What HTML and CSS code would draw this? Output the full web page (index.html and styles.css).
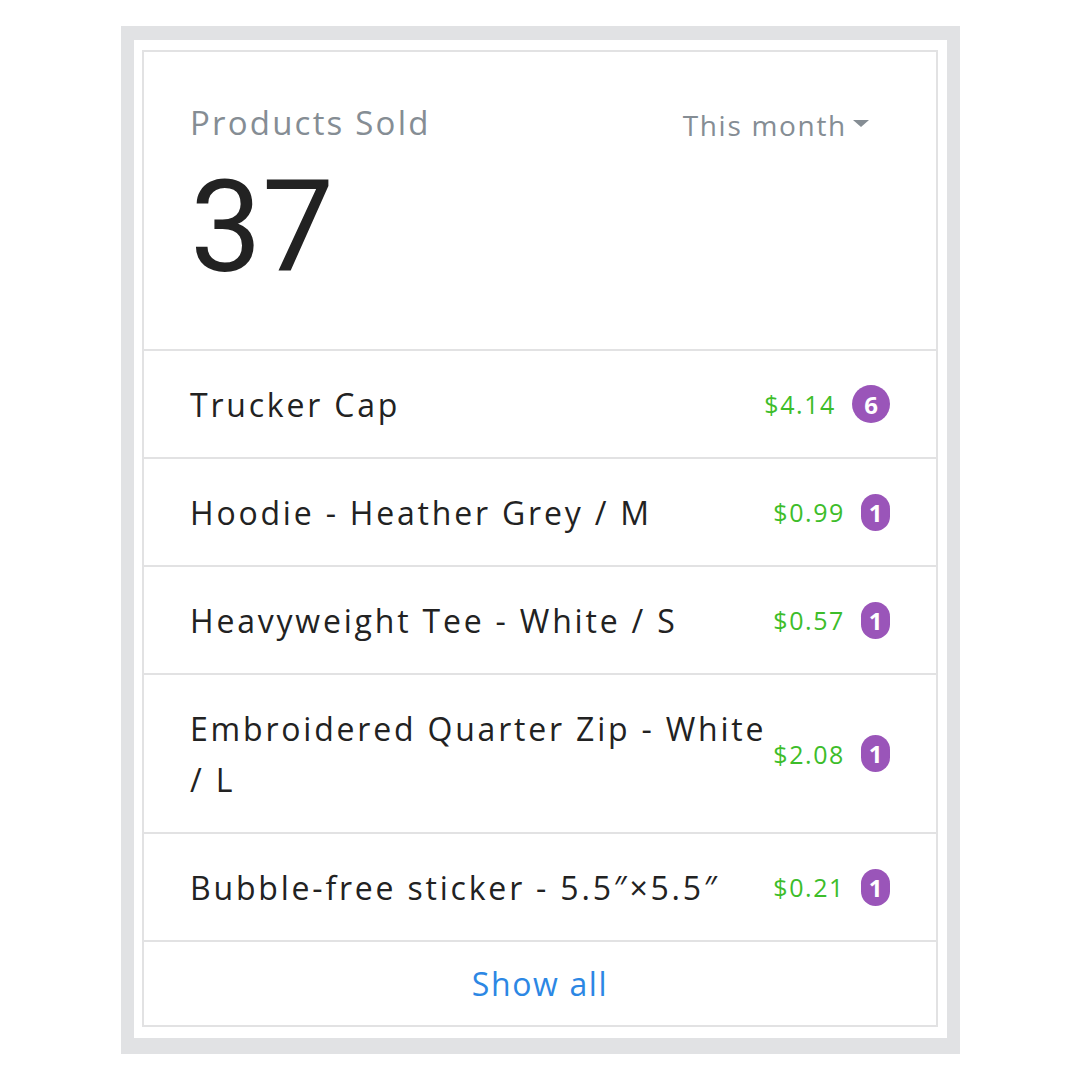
FILE: index.html
```html
<!DOCTYPE html>
<html lang="en">
<head>
<meta charset="utf-8">
<title>Products Sold</title>
<link rel="stylesheet" href="styles.css">
</head>
<body>
<div class="frame">
  <div class="inner">
    <div class="card">
      <div class="card-header">
        <div class="header-top">
          <div class="title">Products Sold</div>
          <div class="period">This month <span class="caret"></span></div>
        </div>
        <div class="total">37</div>
      </div>
      <ul class="list">
        <li class="row"><span class="name">Trucker Cap</span><span class="price">$4.14</span><span class="badge badge-wide">6</span></li>
        <li class="row"><span class="name">Hoodie - Heather Grey / M</span><span class="price">$0.99</span><span class="badge">1</span></li>
        <li class="row"><span class="name">Heavyweight Tee - White / S</span><span class="price">$0.57</span><span class="badge">1</span></li>
        <li class="row"><span class="name">Embroidered Quarter Zip - White / L</span><span class="price">$2.08</span><span class="badge">1</span></li>
        <li class="row"><span class="name">Bubble-free sticker - 5.5″×5.5″</span><span class="price">$0.21</span><span class="badge">1</span></li>
      </ul>
      <div class="footer"><a class="show-all" href="#">Show all</a></div>
    </div>
  </div>
</div>
</body>
</html>
```
FILE: styles.css
```css
html, body {
  margin: 0;
  padding: 0;
  background: #ffffff;
}
body {
  font-family: "Open Sans", "Noto Sans", sans-serif;
  color: #222222;
}
.frame {
  margin: 26px 0 0 121px;
  width: 839px;
  height: 1028px;
  box-sizing: border-box;
  background: #e1e2e4;
  padding: 14px 13px 16px 13px;
}
.inner {
  background: #ffffff;
  height: 100%;
  box-sizing: border-box;
  padding: 10px 9px 11px 8px;
}
.card {
  border: 2px solid #e2e2e3;
  height: 100%;
  box-sizing: border-box;
  display: flex;
  flex-direction: column;
}
.card-header {
  height: 299px;
  box-sizing: border-box;
  padding: 48px 47px 0 46px;
  border-bottom: 2px solid #e2e2e3;
}
.header-top {
  display: flex;
  justify-content: space-between;
  align-items: center;
}
.title {
  font-size: 33px;
  color: #858d94;
  letter-spacing: 2.2px;
  line-height: 46px;
}
.period {
  font-size: 28px;
  color: #858d94;
  letter-spacing: 1.7px;
  margin-right: 20px;
  margin-top: 4px;
  display: flex;
  align-items: center;
}
.caret {
  display: inline-block;
  width: 0;
  height: 0;
  margin-left: 6px;
  border-left: 8px solid transparent;
  border-right: 8px solid transparent;
  border-top: 7px solid #858d94;
  margin-top: -4px;
}
.total {
  font-family: Roboto, "Liberation Sans", sans-serif;
  font-size: 128px;
  line-height: 150px;
  color: #222222;
  margin-top: 6px;
}
.list {
  list-style: none;
  margin: 0;
  padding: 0;
}
.row {
  display: flex;
  align-items: center;
  padding: 27.5px 46px 27.5px 46px;
  border-bottom: 2px solid #e2e2e3;
  min-height: 51px;
}
.name {
  flex: 1;
  font-size: 32px;
  line-height: 51px;
  letter-spacing: 2.8px;
}
.price {
  color: #3dbd2a;
  font-size: 25px;
  letter-spacing: 1.6px;
  margin-right: 16px;
}
.badge {
  display: inline-flex;
  align-items: center;
  justify-content: center;
  min-width: 29px;
  height: 37px;
  border-radius: 15px;
  background: #9a55b9;
  color: #ffffff;
  font-weight: 700;
  font-size: 24px;
  box-sizing: border-box;
  padding: 0 6px;
}
.badge-wide {
  width: 38px;
  height: 38px;
  border-radius: 50%;
}
.footer {
  flex: 1;
  display: flex;
  align-items: center;
  justify-content: center;
}
.show-all {
  color: #2c87e4;
  font-size: 32px;
  text-decoration: none;
  letter-spacing: 1.6px;
}
```
